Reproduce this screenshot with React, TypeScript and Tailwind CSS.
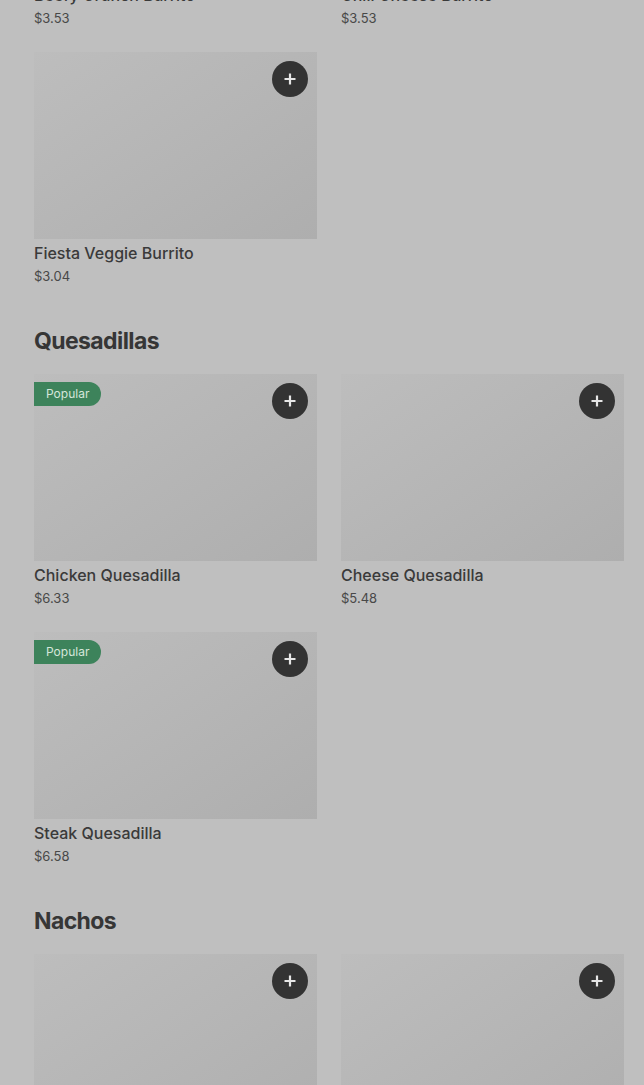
import React from "react";

type Item = { name: string; price: string; popular?: boolean };

const sections: { title?: string; items: Item[] }[] = [
  {
    items: [
      { name: "Beefy Crunch Burrito", price: "$3.53" },
      { name: "Chili Cheese Burrito", price: "$3.53" },
      { name: "Fiesta Veggie Burrito", price: "$3.04" },
    ],
  },
  {
    title: "Quesadillas",
    items: [
      { name: "Chicken Quesadilla", price: "$6.33", popular: true },
      { name: "Cheese Quesadilla", price: "$5.48" },
      { name: "Steak Quesadilla", price: "$6.58", popular: true },
    ],
  },
  {
    title: "Nachos",
    items: [
      { name: "Nachos BellGrande", price: "$5.99" },
      { name: "Chips and Nacho Cheese", price: "$2.19" },
    ],
  },
];

const PlusIcon = () => (
  <svg width="14" height="14" viewBox="0 0 14 14" fill="none">
    <path d="M7 1.5v11M1.5 7h11" stroke="#e6e6e6" strokeWidth="2.2" />
  </svg>
);

const Card = ({ item }: { item: Item }) => (
  <div className="flex flex-col">
    <div className="relative h-[187px] w-full bg-gradient-to-br from-[#bdbdbd] to-[#aeaeae]">
      {item.popular && (
        <span className="absolute left-0 top-2 flex h-6 items-center rounded-r-full bg-[#3d835b] px-3 text-[12px] text-[#d5e6da]">
          Popular
        </span>
      )}
      <button className="absolute right-[9px] top-[9px] flex h-9 w-9 items-center justify-center rounded-full bg-[#333333]">
        <PlusIcon />
      </button>
    </div>
    <div className="mt-[2px] h-6 text-[16px] font-medium leading-6 text-[#3a3a3a]">
      {item.name}
    </div>
    <div className="mt-[1px] h-5 text-[13px] leading-5 text-[#484848]">
      {item.price}
    </div>
  </div>
);

export default function App() {
  return (
    <div
      className="h-[1085px] overflow-hidden bg-[#bfbfbf]"
      style={{ fontFamily: "Inter, 'Liberation Sans', sans-serif" }}
    >
      <div className="mt-[-206px] flex flex-col px-[34px] pr-5">
        {sections.map((s, i) => (
          <section key={i} className="flex flex-col">
            {s.title && (
              <h2 className="mt-[39px] mb-[17px] h-8 text-[23px] font-bold leading-8 tracking-[-0.6px] text-[#363636]">
                {s.title}
              </h2>
            )}
            <div className="grid grid-cols-2 gap-x-6 gap-y-6">
              {s.items.map((it) => (
                <Card key={it.name} item={it} />
              ))}
            </div>
          </section>
        ))}
      </div>
    </div>
  );
}
